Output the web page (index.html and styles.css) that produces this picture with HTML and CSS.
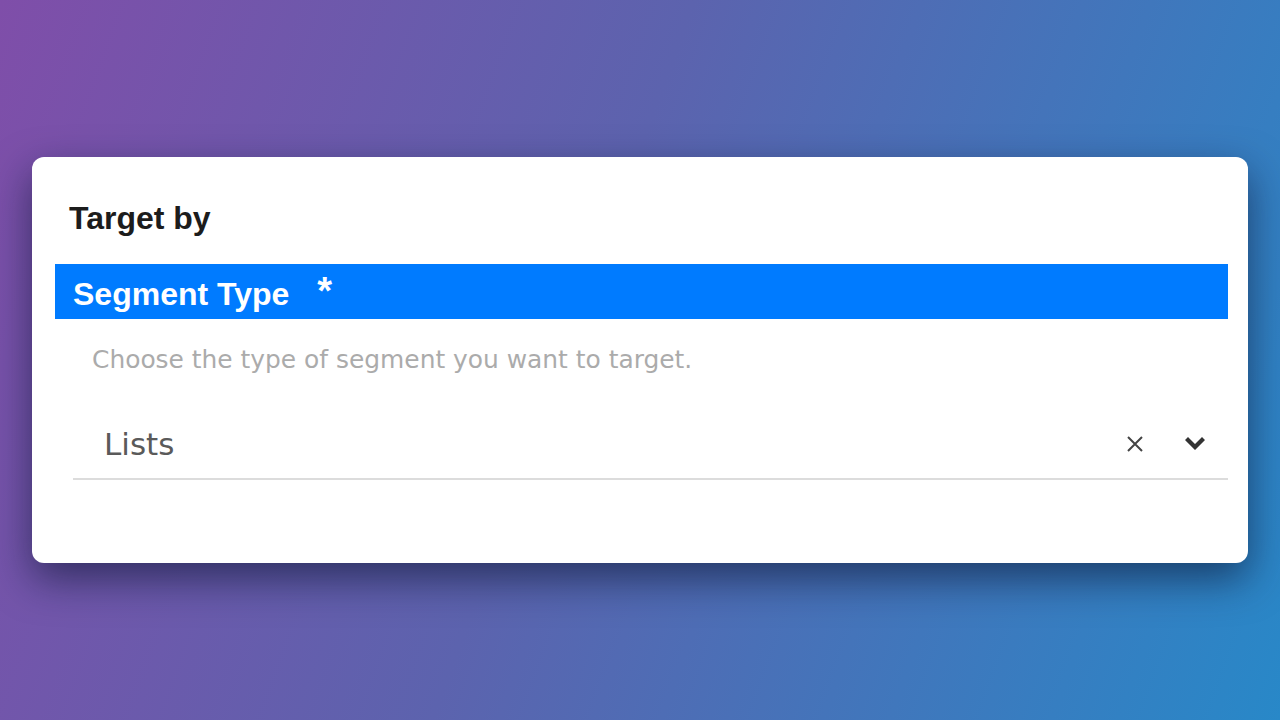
FILE: index.html
```html
<!DOCTYPE html>
<html>
<head>
    <meta charset="utf-8">
    <title>Target by</title>
    <link rel="stylesheet" href="styles.css">
</head>
<body>
    <div class="card">
        <h2 class="card-title">Target by</h2>
        <div class="field-label">
            <span>Segment Type</span>
            <span class="required">*</span>
        </div>
        <p class="field-help">Choose the type of segment you want to target.</p>
        <div class="select">
            <span class="select-value">Lists</span>
            <span class="select-icons">
                <svg class="icon-clear" width="18" height="18" viewBox="0 0 18 18">
                    <path d="M2 2 L16 16 M16 2 L2 16" stroke="#444" stroke-width="2" fill="none"/>
                </svg>
                <svg class="icon-caret" width="22" height="14" viewBox="0 0 22 14">
                    <path d="M1 3 L4 0 L11 7 L18 0 L21 3 L11 13 Z" fill="#333"/>
                </svg>
            </span>
        </div>
    </div>
</body>
</html>
```

FILE: styles.css
```css
html, body {
    height: 100%;
}
body {
    margin: 0;
    font-family: "Liberation Sans", Arial, sans-serif;
    background: linear-gradient(110deg, #7f4ea9 0%, #5c63ae 45%, #2888c8 100%);
    display: flex;
    align-items: flex-start;
    padding-top: 157px;
    box-sizing: border-box;
}
.card {
    width: 1216px;
    margin-left: 32px;
    height: 406px;
    box-sizing: border-box;
    background: white;
    border-radius: 12px;
    box-shadow: 0 16px 40px rgba(10, 20, 50, 0.6);
    padding: 38px 20px 0 23px;
}
.card-title {
    margin: 0 0 23px 14px;
    font-size: 32px;
    line-height: 46px;
    font-weight: bold;
    color: #1c1c1c;
}
.field-label {
    background: #007bff;
    color: white;
    font-size: 32px;
    font-weight: bold;
    height: 55px;
    line-height: 58px;
    padding: 4px 0 0 18px;
    box-sizing: border-box;
    display: flex;
    align-items: center;
}
.required {
    margin-left: 28px;
    margin-top: -6px;
    font-size: 38px;
}
.field-help {
    margin: 21px 0 0 37px;
    font-family: "DejaVu Sans", sans-serif;
    font-size: 24.9px;
    line-height: 40px;
    color: #ababab;
}
.select {
    margin: 29px 0 0 18px;
    height: 69px;
    border-bottom: 2px solid #dcdcdc;
    display: flex;
    align-items: center;
    padding: 0 22px 0 31px;
}
.select-value {
    flex: 1;
    font-family: "DejaVu Sans", sans-serif;
    font-size: 31px;
    color: #5a5a5a;
}
.select-icons {
    display: flex;
    align-items: center;
    gap: 40px;
}
```
